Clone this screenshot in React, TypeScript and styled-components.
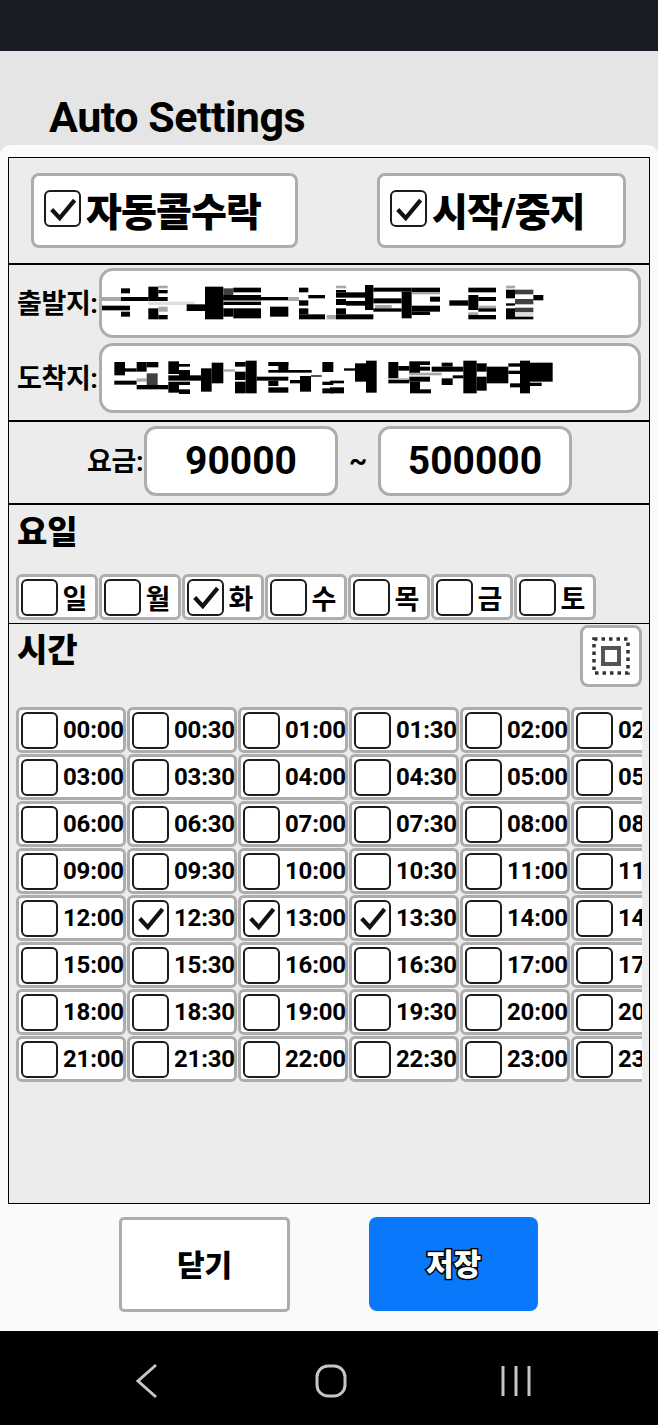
import React from 'react';
import styled, { createGlobalStyle } from 'styled-components';

const GlobalStyle = createGlobalStyle`
  html, body {
    margin: 0;
    padding: 0;
    background: #000;
  }
  * {
    box-sizing: border-box;
  }
`;

const KR = `Roboto, 'Noto Sans CJK KR', sans-serif`;

const Screen = styled.div`
  width: 658px;
  height: 1425px;
  display: flex;
  flex-direction: column;
  overflow: hidden;
  background: #e5e5e5;
  font-family: ${KR};
  color: #000;
`;

const StatusBar = styled.div`
  height: 51px;
  background: #1a1d26;
`;

const Header = styled.div`
  height: 94px;
  padding: 41px 0 0 49px;
`;

const Title = styled.h1`
  margin: 0;
  font-size: 43px;
  line-height: 50px;
  font-weight: 700;
  letter-spacing: -0.5px;
`;

const Modal = styled.div`
  height: 1186px;
  padding: 12px 8px 0;
  background: #fafafa;
  border-radius: 10px 10px 0 0;
`;

const Panel = styled.div`
  height: 1047px;
  display: flex;
  flex-direction: column;
  border: 1px solid #000;
  background: #ececec;
`;

const Section = styled.section<{ $height?: number; $line?: number }>`
  ${p => (p.$height ? `height: ${p.$height}px; flex: none;` : 'flex: 1; min-height: 0;')}
  ${p => (p.$line ? `border-bottom: ${p.$line}px solid #000;` : '')}
`;

const ToggleRow = styled(Section)`
  display: flex;
  gap: 79px;
  padding: 15px 0 0 22px;
`;

const Box = styled.div`
  background: #fff;
  border: 3px solid #adadad;
  border-radius: 8px;
`;

const ToggleCard = styled(Box)<{ $width: number }>`
  width: ${p => p.$width}px;
  height: 75px;
  padding: 0 0 4px 10px;
  display: flex;
  align-items: center;
  gap: 5px;
  font-size: 39px;
  font-weight: 900;
  letter-spacing: -0.9px;
  white-space: nowrap;
`;

const CheckBox = styled.span`
  flex: none;
  width: 37px;
  height: 37px;
  display: flex;
  align-items: center;
  justify-content: center;
  background: #fff;
  border: 2px solid #1c1c1c;
  border-radius: 6px;
`;

const CheckMark = styled.svg`
  width: 90%;
  height: 90%;
  display: block;
`;

const RouteRows = styled(Section)`
  display: flex;
  flex-direction: column;
  gap: 5px;
  padding: 3px 8px 0 8px;
`;

const RouteRow = styled.div`
  display: flex;
  align-items: center;
`;

const FieldLabel = styled.span`
  flex: none;
  padding-bottom: 4px;
  font-size: 27px;
  font-weight: 700;
  letter-spacing: -0.4px;
  white-space: nowrap;
`;

const RouteLabel = styled(FieldLabel)`
  width: 82px;
`;

const RouteInput = styled(Box)`
  width: 542px;
  height: 70px;
  border-radius: 14px;
`;

const Mosaic = styled.svg`
  display: block;
  width: 536px;
  height: 64px;
`;

const FareRow = styled(Section)`
  display: flex;
  align-items: flex-start;
  padding: 4px 0 0 78px;
`;

const FareLabel = styled(FieldLabel)`
  width: 57px;
  align-self: center;
  padding-bottom: 10px;
`;

const FareInput = styled(Box)`
  width: 194px;
  height: 70px;
  display: flex;
  align-items: center;
  justify-content: center;
  border-radius: 12px;
  font-size: 39px;
  font-weight: 700;
`;

const Tilde = styled.span`
  width: 40px;
  line-height: 70px;
  text-align: center;
  font-size: 28px;
  font-weight: 700;
`;

const SectionTitle = styled.h2`
  margin: 3px 0 0 1px;
  font-size: 33px;
  line-height: 46px;
  font-weight: 900;
`;

const DaySection = styled(Section)`
  padding: 2px 0 0 7px;
`;

const DayRow = styled.div`
  display: flex;
  gap: 1px;
  margin-top: 18px;
`;

const Chip = styled(Box)<{ $width: number }>`
  flex: none;
  width: ${p => p.$width}px;
  height: 46px;
  display: flex;
  align-items: center;
  padding-left: 2px;
  border-radius: 6px;
  font-weight: 700;
  white-space: nowrap;
`;

const DayName = styled.span`
  flex: 1;
  padding-right: 3px;
  text-align: center;
  font-size: 27px;
`;

const TimeSection = styled(Section)`
  padding: 1px 7px 0 7px;
`;

const TimeHeader = styled.div`
  display: flex;
  justify-content: space-between;
  height: 82px;
`;

const SelectAll = styled(Box)`
  width: 62px;
  height: 62px;
  padding: 0;
  display: flex;
  align-items: center;
  justify-content: center;
`;

const TimeViewport = styled.div`
  overflow: hidden;
`;

const TimeGrid = styled.div`
  width: 666px;
  display: grid;
  grid-template-columns: repeat(6, 110px);
  grid-auto-rows: 46px;
  gap: 1px;
`;

const TimeText = styled.span`
  margin-left: 5px;
  font-size: 24px;
  letter-spacing: -0.2px;
`;

const Footer = styled.div`
  display: flex;
  justify-content: center;
  gap: 79px;
  padding: 13px 1px 0 0;
`;

const CloseButton = styled.button`
  width: 171px;
  height: 95px;
  padding: 0 0 4px;
  background: #fff;
  border: 3px solid #adadad;
  border-radius: 5px;
  color: #000;
  font-family: ${KR};
  font-size: 30px;
  font-weight: 900;
`;

const SaveButton = styled.button`
  width: 169px;
  height: 94px;
  padding: 0 0 4px;
  background: #0a78fb;
  border: none;
  border-radius: 8px;
  color: #fff;
  font-family: ${KR};
  font-size: 30px;
  font-weight: 900;
  -webkit-text-stroke: 3px #000;
  paint-order: stroke fill;
`;

const NavBar = styled.nav`
  height: 94px;
  flex: none;
  display: flex;
  align-items: flex-start;
  padding-top: 32px;
  background: #000;
`;

const NavSlot = styled.div<{ $left: number; $width: number }>`
  width: ${p => p.$width}px;
  margin-left: ${p => p.$left}px;
  display: flex;
`;

const NavIcon = styled.svg`
  display: block;
  fill: none;
  stroke: #c6c6c6;
  stroke-width: 3;
`;

// [x0, x1, y0, y1, shade] read off 3x crops of the blurred address text
type Cell = [number, number, number, number, string?];

const G = '#a8a8a8';
const L = '#dedede';
const D = '#404040';

const crop = (ox: number, oy: number, cells: Cell[]) =>
  cells.map(([x0, x1, y0, y1, fill]) => ({
    x: ox + x0 / 3,
    y: oy + y0 / 3,
    width: (x1 - x0) / 3,
    height: (y1 - y0) / 3,
    fill: fill ?? '#000',
  }));

const fromCells = [
  ...crop(95, 275, [
    [20, 78, 66, 78, G], [78, 105, 40, 55], [78, 160, 66, 78], [20, 105, 92, 106], [78, 105, 110, 125],
    [160, 190, 35, 70], [190, 218, 32, 40, G], [190, 218, 45, 55], [160, 218, 66, 78], [160, 300, 80, 90, L],
    [160, 190, 100, 133], [190, 218, 120, 133], [190, 218, 95, 110, G], [275, 330, 88, 108],
    [330, 385, 35, 133], [385, 415, 40, 70, D], [415, 498, 38, 52], [385, 498, 60, 76], [385, 580, 66, 76],
    [385, 498, 80, 90], [385, 415, 100, 125], [415, 498, 100, 130], [525, 580, 95, 125], [580, 612, 66, 78, G],
    [612, 640, 38, 52], [612, 640, 76, 92], [612, 690, 118, 133], [612, 640, 100, 118], [640, 690, 60, 70],
  ]),
  ...crop(320, 275, [
    [20, 48, 120, 133, G], [48, 78, 32, 40, G], [48, 78, 45, 52], [48, 135, 52, 68], [135, 160, 30, 105],
    [48, 78, 72, 90], [78, 135, 78, 92], [48, 160, 118, 133], [48, 78, 100, 118], [160, 275, 38, 50],
    [245, 275, 50, 130], [160, 245, 70, 85], [165, 215, 90, 100, G], [160, 245, 100, 110], [275, 360, 38, 52],
    [275, 360, 52, 58, G], [330, 360, 65, 80], [275, 360, 92, 110], [275, 330, 110, 120], [388, 445, 76, 92],
    [445, 528, 38, 52], [445, 475, 60, 105], [475, 528, 66, 78], [475, 528, 92, 100, G], [475, 528, 100, 110],
    [445, 475, 112, 120, G], [445, 528, 120, 133], [558, 585, 32, 40, G], [558, 585, 44, 70], [585, 640, 44, 58, D],
    [585, 640, 72, 88, D], [640, 670, 60, 76], [558, 585, 85, 92], [558, 585, 100, 133], [585, 640, 98, 112, D],
    [585, 640, 112, 125, L], [585, 640, 125, 133],
  ]),
];

const toCells = [
  ...crop(105, 350, [
    [28, 60, 36, 76], [60, 95, 55, 65], [95, 125, 36, 65], [125, 160, 36, 52], [28, 95, 92, 104],
    [95, 125, 85, 95, G], [125, 158, 70, 108, D], [95, 190, 105, 118], [190, 222, 34, 72], [222, 255, 42, 50],
    [222, 255, 60, 80], [190, 290, 76, 92], [190, 222, 95, 128], [222, 255, 95, 105], [222, 255, 118, 132],
    [288, 320, 55, 125], [320, 355, 38, 100], [355, 390, 58, 65, G], [390, 422, 36, 50], [390, 422, 65, 90],
    [422, 455, 32, 130], [390, 422, 95, 130], [455, 550, 80, 92], [490, 550, 36, 48], [490, 620, 60, 68],
    [490, 520, 92, 108], [490, 550, 112, 128], [520, 550, 36, 65], [555, 585, 90, 100], [585, 618, 78, 125],
    [618, 650, 76, 80], [652, 685, 36, 66], [652, 685, 95, 105], [652, 685, 115, 130],
  ]),
  ...crop(330, 350, [
    [0, 42, 92, 100], [0, 42, 112, 130], [42, 75, 55, 62], [75, 108, 40, 95], [108, 140, 32, 128],
    [175, 205, 36, 85], [205, 238, 48, 62], [238, 300, 34, 45], [175, 238, 90, 100], [175, 238, 85, 90, G],
    [238, 270, 45, 70], [270, 300, 50, 62], [238, 335, 68, 76, G], [238, 300, 80, 95], [240, 270, 95, 130],
    [270, 303, 118, 130], [335, 368, 38, 50], [305, 400, 50, 65], [335, 368, 85, 105], [400, 440, 32, 130],
    [368, 400, 76, 85], [440, 470, 40, 65], [440, 470, 80, 122], [470, 535, 50, 100], [535, 570, 40, 50],
    [535, 570, 62, 72], [570, 600, 32, 130], [600, 668, 38, 95], [540, 570, 100, 112], [600, 635, 98, 108],
  ]),
];

const Check = () => (
  <CheckMark viewBox="0 0 24 24" fill="none" stroke="#111" strokeWidth="3.4">
    <path d="M3 12.5 L9.5 19.5 L21.5 5" />
  </CheckMark>
);

const Tick = ({ checked }: { checked?: boolean }) => (
  <CheckBox>{checked && <Check />}</CheckBox>
);

const days = ['일', '월', '화', '수', '목', '금', '토'];
const checkedTimes = ['12:30', '13:00', '13:30'];
const times = Array.from({ length: 48 }, (_, i) => {
  const hour = String(Math.floor(i / 2)).padStart(2, '0');
  return `${hour}:${i % 2 ? '30' : '00'}`;
});

const App: React.FC = () => {
  return (
    <Screen>
      <GlobalStyle />
      <StatusBar />
      <Header>
        <Title>Auto Settings</Title>
      </Header>
      <Modal>
        <Panel>
          <ToggleRow $height={107} $line={2}>
            <ToggleCard $width={267}>
              <Tick checked />
              자동콜수락
            </ToggleCard>
            <ToggleCard $width={249}>
              <Tick checked />
              시작/중지
            </ToggleCard>
          </ToggleRow>

          <RouteRows $height={157} $line={2}>
            <RouteRow>
              <RouteLabel>출발지:</RouteLabel>
              <RouteInput>
                <Mosaic viewBox="102 271 536 64">
                  {fromCells.map((c, i) => <rect key={i} {...c} />)}
                </Mosaic>
              </RouteInput>
            </RouteRow>
            <RouteRow>
              <RouteLabel>도착지:</RouteLabel>
              <RouteInput>
                <Mosaic viewBox="102 346 536 64">
                  {toCells.map((c, i) => <rect key={i} {...c} />)}
                </Mosaic>
              </RouteInput>
            </RouteRow>
          </RouteRows>

          <FareRow $height={83} $line={2}>
            <FareLabel>요금:</FareLabel>
            <FareInput>90000</FareInput>
            <Tilde>~</Tilde>
            <FareInput>500000</FareInput>
          </FareRow>

          <DaySection $height={119} $line={1}>
            <SectionTitle>요일</SectionTitle>
            <DayRow>
              {days.map(day => (
                <Chip key={day} $width={82}>
                  <Tick checked={day === '화'} />
                  <DayName>{day}</DayName>
                </Chip>
              ))}
            </DayRow>
          </DaySection>

          <TimeSection>
            <TimeHeader>
              <SectionTitle>시간</SectionTitle>
              <SelectAll>
                <svg width="38" height="38" viewBox="0 0 38 38" fill="none">
                  <rect x="2" y="2" width="34" height="34" stroke="#333" strokeWidth="3.5" strokeDasharray="3.5 4" />
                  <rect x="11" y="11" width="16" height="16" stroke="#555" strokeWidth="4" />
                </svg>
              </SelectAll>
            </TimeHeader>
            <TimeViewport>
              <TimeGrid>
                {times.map(time => (
                  <Chip key={time} $width={110}>
                    <Tick checked={checkedTimes.includes(time)} />
                    <TimeText>{time}</TimeText>
                  </Chip>
                ))}
              </TimeGrid>
            </TimeViewport>
          </TimeSection>
        </Panel>

        <Footer>
          <CloseButton>닫기</CloseButton>
          <SaveButton>저장</SaveButton>
        </Footer>
      </Modal>

      <NavBar>
        <NavSlot $left={134} $width={26}>
          <NavIcon width="26" height="36" viewBox="0 0 26 36">
            <path d="M22 2 L4 18 L22 34" />
          </NavIcon>
        </NavSlot>
        <NavSlot $left={155} $width={32}>
          <NavIcon width="32" height="36" viewBox="0 0 32 36">
            <rect x="2" y="3" width="28" height="30" rx="11" />
          </NavIcon>
        </NavSlot>
        <NavSlot $left={153} $width={32}>
          <NavIcon width="32" height="36" viewBox="0 0 32 36">
            <path d="M3 3 V33 M16 3 V33 M29 3 V33" />
          </NavIcon>
        </NavSlot>
      </NavBar>
    </Screen>
  );
};

export default App;
